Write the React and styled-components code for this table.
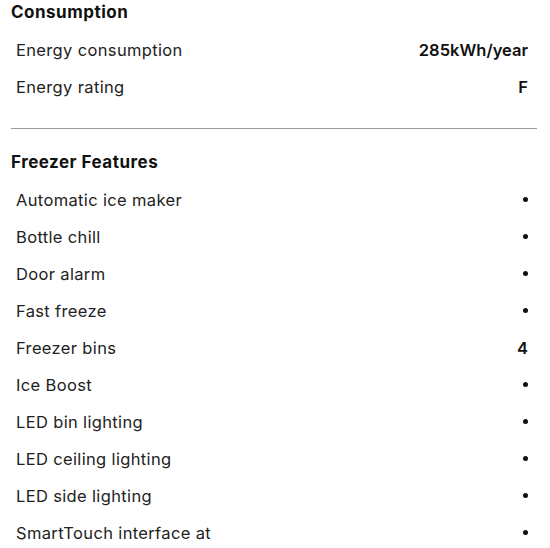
import React from "react";
import styled, { createGlobalStyle } from "styled-components";

const GlobalStyle = createGlobalStyle`
  body {
    margin: 0;
    background: #ffffff;
    font-family: "Inter", "Noto Sans", sans-serif;
    color: #1f1f1f;
  }
`;

const sections = [
  {
    title: "Consumption",
    rows: [
      { label: "Energy consumption", value: "285kWh/year" },
      { label: "Energy rating", value: "F" },
    ],
  },
  {
    title: "Freezer Features",
    rows: [
      { label: "Automatic ice maker", dot: true },
      { label: "Bottle chill", dot: true },
      { label: "Door alarm", dot: true },
      { label: "Fast freeze", dot: true },
      { label: "Freezer bins", value: "4" },
      { label: "Ice Boost", dot: true },
      { label: "LED bin lighting", dot: true },
      { label: "LED ceiling lighting", dot: true },
      { label: "LED side lighting", dot: true },
      { label: "SmartTouch interface at", dot: true },
    ],
  },
];

const Page = styled.div`
  width: 550px;
  height: 548px;
  overflow: hidden;
  padding: 0 13px 0 11px;
  box-sizing: border-box;
`;

const Section = styled.section`
  padding-bottom: 22px;
  border-bottom: ${(p) => (p.$last ? "none" : "1px solid #9a9a9a")};
  margin-bottom: 21px;
`;

const Title = styled.h3`
  margin: 0 0 7.5px;
  font-size: 17px;
  line-height: 24px;
  font-weight: 700;
  letter-spacing: 0.5px;
  color: #111;
`;

const Row = styled.div`
  display: flex;
  align-items: center;
  justify-content: space-between;
  height: 37px;
  padding: 0 9px 0 5px;
  font-size: 16.5px;
  letter-spacing: 0.35px;
`;

const Label = styled.span`
  color: #222;
`;

const Value = styled.span`
  font-weight: 600;
  color: #111;
  letter-spacing: 0;
`;

const Dot = styled.span`
  width: 5px;
  height: 5px;
  border-radius: 50%;
  background: #111;
`;

export default function App() {
  return (
    <>
      <GlobalStyle />
      <Page>
        {sections.map((s, i) => (
          <Section key={s.title} $last={i === sections.length - 1}>
            <Title>{s.title}</Title>
            {s.rows.map((r) => (
              <Row key={r.label}>
                <Label>{r.label}</Label>
                {r.dot ? <Dot /> : <Value>{r.value}</Value>}
              </Row>
            ))}
          </Section>
        ))}
      </Page>
    </>
  );
}
